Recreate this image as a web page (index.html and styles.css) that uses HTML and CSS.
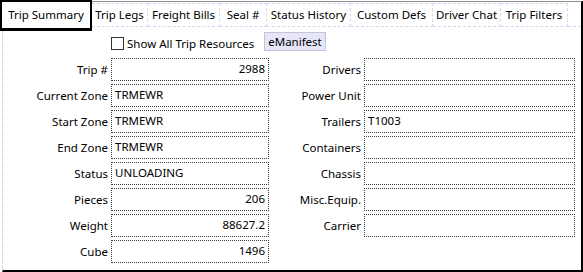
FILE: index.html
```html
<!DOCTYPE html>
<html lang="en">

<head>
    <meta charset="UTF-8">
    <meta name="viewport" content="width=device-width, initial-scale=1.0">
    <title>Trip Summary</title>
    <link rel="stylesheet" href="styles.css">
</head>

<body>
    <div class="tabbar">
        <div class="tab-active">Trip Summary</div>
        <div class="tabs">
            <div class="tab w-legs">Trip Legs</div>
            <div class="tab w-bills">Freight Bills</div>
            <div class="tab w-seal">Seal #</div>
            <div class="tab w-hist">Status History</div>
            <div class="tab w-defs">Custom Defs</div>
            <div class="tab w-chat">Driver Chat</div>
            <div class="tab w-filt">Trip Filters</div>
            <div class="tab-fill"></div>
        </div>
    </div>

    <div class="page">
        <div class="toolrow">
            <span class="check"></span>
            <span class="check-label">Show All Trip Resources</span>
            <span class="btn">eManifest</span>
        </div>

        <div class="fields">
            <div class="lbl">Trip #</div>
            <div class="box num">2988</div>
            <div class="lbl">Drivers</div>
            <div class="box"></div>

            <div class="lbl">Current Zone</div>
            <div class="box">TRMEWR</div>
            <div class="lbl">Power Unit</div>
            <div class="box"></div>

            <div class="lbl">Start Zone</div>
            <div class="box">TRMEWR</div>
            <div class="lbl">Trailers</div>
            <div class="box">T1003</div>

            <div class="lbl">End Zone</div>
            <div class="box">TRMEWR</div>
            <div class="lbl">Containers</div>
            <div class="box"></div>

            <div class="lbl">Status</div>
            <div class="box">UNLOADING</div>
            <div class="lbl">Chassis</div>
            <div class="box"></div>

            <div class="lbl">Pieces</div>
            <div class="box num">206</div>
            <div class="lbl">Misc.Equip.</div>
            <div class="box"></div>

            <div class="lbl">Weight</div>
            <div class="box num">88627.2</div>
            <div class="lbl">Carrier</div>
            <div class="box"></div>

            <div class="lbl">Cube</div>
            <div class="box num">1496</div>
        </div>
    </div>
</body>

</html>
```

FILE: styles.css
```css
* {
    box-sizing: border-box;
}

body {
    margin: 0;
    padding: 0;
    width: 583px;
    height: 272px;
    background: #fff;
    color: #000;
    font-family: "Noto Sans", "Open Sans", sans-serif;
    font-size: 11.5px;
    overflow: hidden;
}

/* tab strip */
.tabbar {
    display: flex;
    height: 31px;
}

.tab-active {
    width: 92px;
    height: 31px;
    border: 2px solid #000;
    border-bottom-width: 3px;
    padding-top: 5px;
    text-align: center;
    background: #fff;
}

.tabs {
    flex: 1;
    display: flex;
    align-items: flex-start;
    margin-top: 1px;
    border-top: 1px solid #8c8c8c;
    border-right: 2px solid #000;
}

.tab {
    height: 24px;
    margin-top: 1px;
    padding-top: 3px;
    text-align: center;
    white-space: nowrap;
    border-top: 1px dashed #d6d6f2;
    border-right: 1px dashed #d6d6f2;
    border-bottom: 1px dashed #d6d6f2;
}

.w-legs { width: 56px; }
.w-bills { width: 72px; }
.w-seal { width: 47px; }
.w-hist { width: 84px; }
.w-defs { width: 82px; }
.w-chat { width: 68px; }
.w-filt { width: 67px; }

.tab-fill {
    flex: 1;
    height: 25px;
    border-bottom: 1px dashed #d6d6f2;
}

/* page body */
.page {
    height: 241px;
    margin-left: 2px;
    border-left: 1px dotted #b8b8e6;
    border-right: 2px solid #000;
    border-bottom: 2px solid #000;
    padding-top: 1px;
}

.toolrow {
    display: flex;
    align-items: center;
    height: 19px;
    padding-left: 108px;
}

.check {
    width: 13px;
    height: 13px;
    border: 1px solid #333;
    margin-top: 3px;
}

.check-label {
    width: 140px;
    padding-left: 3px;
    margin-top: 3px;
}

.btn {
    width: 62px;
    height: 19px;
    line-height: 17px;
    text-align: center;
    border: 1px solid #c4c4d4;
    background: #e6e6f8;
}

.fields {
    display: grid;
    grid-template-columns: 108px 158px 95px 211px;
    grid-auto-rows: 23px;
    row-gap: 3px;
    margin-top: 7px;
}

.lbl {
    text-align: right;
    padding-right: 3px;
    line-height: 23px;
    white-space: nowrap;
}

.box {
    border: 1px dotted #3e3e30;
    padding: 0 3px;
    line-height: 20px;
    white-space: nowrap;
}

.num {
    text-align: right;
}
```
